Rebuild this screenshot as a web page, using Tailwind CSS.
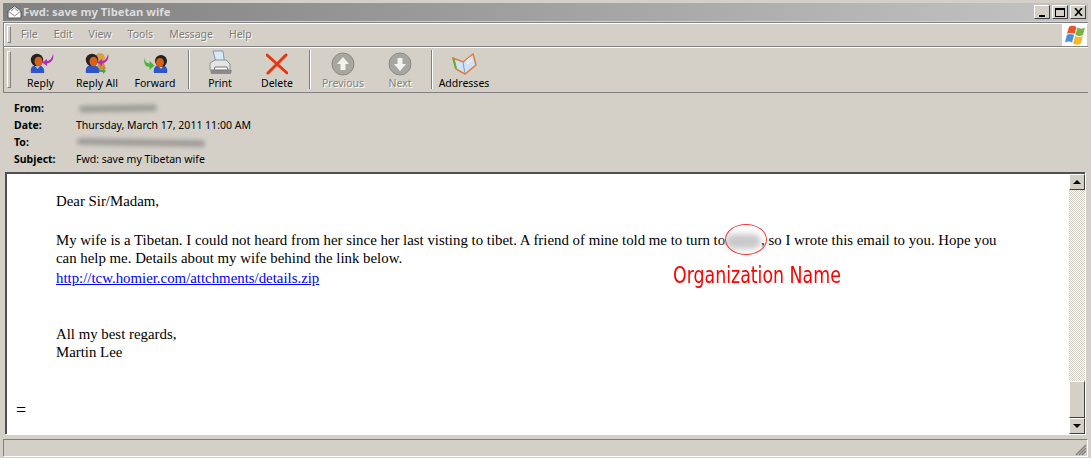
<!DOCTYPE html>
<html lang="en">
<head>
    <meta charset="UTF-8">
    <title>Fwd: save my Tibetan wife</title>
    <script src="https://cdn.jsdelivr.net/npm/@tailwindcss/browser@4"></script>
</head>
<body class="w-[1091px] h-[458px] overflow-hidden bg-[#d4d0c8] font-['Noto_Sans',sans-serif] text-[10.5px] text-black">
<div class="flex flex-col h-[458px] pt-[3px] pb-[1px]">

    <!-- title bar -->
    <div class="mx-[3px] h-[18px] shrink-0 flex items-center pl-[4px] pr-[2px] bg-gradient-to-r from-[#808080] to-[#c4c4c4]">
        <svg width="15" height="14" viewBox="0 0 15 14" class="mr-[1px]"><path d="M1 13V6L7.500 1 14 6v7z" fill="#fff" stroke="#555"/><path d="M1 6l6.500 5L14 6M4 6l3.500-3L11 6" fill="none" stroke="#888"/></svg>
        <span class="font-bold text-[#dcdcdc] leading-none text-[11.25px]">Fwd: save my Tibetan wife</span>
        <div class="ml-auto flex gap-[2px] items-center">
            <div class="w-[16px] h-[14px] bg-[#d4d0c8] border border-t-white border-l-white border-r-[#404040] border-b-[#404040] flex items-end justify-center pb-[1px]"><div class="w-[6px] h-[2px] bg-black"></div></div>
            <div class="w-[16px] h-[14px] bg-[#d4d0c8] border border-t-white border-l-white border-r-[#404040] border-b-[#404040] flex items-center justify-center"><div class="w-[10px] h-[9px] border border-black border-t-2"></div></div>
            <div class="w-[16px] h-[14px] bg-[#d4d0c8] border border-t-white border-l-white border-r-[#404040] border-b-[#404040] flex items-center justify-center"><svg width="9" height="8" viewBox="0 0 9 8"><path d="M1 0l7 8M8 0L1 8" stroke="#000" stroke-width="1.6"/></svg></div>
        </div>
    </div>

    <!-- menu bar -->
    <div class="mt-[1px] h-[25px] shrink-0 flex border-y border-t-[#808080] border-b-[#808080] shadow-[inset_0_1px_0_#fff,inset_1px_0_0_#fff] mx-[3px] border-l border-l-[#808080]">
        <div class="w-[4px] my-[3px] ml-[3px] border border-r-[#808080] border-b-[#808080] border-t-white border-l-white"></div>
        <div class="flex items-center text-[#7d7b76] [text-shadow:1px_1px_0_#fff] pl-[10px] gap-[16px]">
            <span>File</span><span>Edit</span><span>View</span><span>Tools</span><span>Message</span><span>Help</span>
        </div>
        <div class="ml-auto w-[25px] bg-white flex items-center justify-center mr-[1px]">
            <svg width="22" height="22" viewBox="0 0 22 22"><path d="M5 3C8 1 10 2 12.500 3L10.500 10C8 8.500 5.500 8.500 3 10z" fill="#e8532b"/><path d="M13.500 3.500C16 5 19 5 21 3.500L19 11C17 12.500 14 12.500 11.500 10.500z" fill="#7bb342"/><path d="M2.800 11C5 9.500 8 9.500 10.200 11L8 18.500C6 17 3 17 1 18.500z" fill="#4a90d9"/><path d="M11.200 11.500C14 13.500 16.500 13.500 18.800 12L16.800 19.500C14 21.500 11.500 21 9 19.500z" fill="#f5b82e"/></svg>
        </div>
    </div>

    <!-- toolbar -->
    <div class="mx-[3px] h-[46px] shrink-0 flex border-b border-[#808080] border-l border-l-[#808080] shadow-[inset_0_1px_0_#fff]">
        <div class="w-[4px] my-[4px] ml-[3px] border border-r-[#808080] border-b-[#808080] border-t-white border-l-white"></div>

        <button class="w-[59px] flex flex-col items-center pt-[5px]">
            <svg width="28" height="24" viewBox="0 0 28 24"><path d="M4 21c-1-5 1-8 6-8s8 3 7 8z" fill="#2f55c8"/><path d="M8 14l2.500 3 2.500-3z" fill="#bcd"/><circle cx="10" cy="8" r="6.200" fill="#222"/><ellipse cx="11.500" cy="9.500" rx="4" ry="4.800" fill="#d9601a"/><path d="M26 2c1.500 5-1.500 9-6 9.500V14l-5-3.500 5-3.500v2c3 0 5-3 6-7z" fill="#b52fb0"/></svg>
            <span class="mt-[2px] leading-none">Reply</span>
        </button>
        <button class="w-[54px] flex flex-col items-center pt-[5px]">
            <svg width="28" height="24" viewBox="0 0 28 24"><circle cx="17" cy="6" r="5" fill="#dca04a"/><path d="M12 19l4-8h5l2 6z" fill="#c98f3c"/><path d="M3 21c-1-5 1-8 6-8s8 3 7 8z" fill="#2f55c8"/><circle cx="9" cy="8" r="6.200" fill="#222"/><ellipse cx="10.500" cy="9.500" rx="4" ry="4.800" fill="#d9601a"/><path d="M25 2c1.500 5-1.500 9-6 9.500V14l-5-3.500 5-3.500v2c3 0 5-3 6-7z" fill="#b52fb0"/><path d="M16 18h4v-2l3 3-3 3v-2h-4z" fill="#3fa83f"/></svg>
            <span class="mt-[2px] leading-none">Reply All</span>
        </button>
        <button class="w-[62px] flex flex-col items-center pt-[5px]">
            <svg width="28" height="24" viewBox="0 0 28 24"><path d="M13 21c-1-5 1-8 6.500-8s7.500 3 6.500 8z" fill="#2f55c8"/><path d="M17.500 14l2.500 3 2.500-3z" fill="#bcd"/><circle cx="20" cy="9" r="6" fill="#222"/><ellipse cx="19" cy="10.500" rx="3.900" ry="4.500" fill="#d9601a"/><path d="M4 5c-1 3 1 6 4.500 6.500V9l5 4.500-5 4.500v-3C4 15 2 10 4 5z" fill="#49b63c"/></svg>
            <span class="mt-[2px] leading-none">Forward</span>
        </button>
        <div class="w-[2px] my-[3px] ml-[2px] border-l border-l-[#808080] border-r border-r-white"></div>

        <button class="w-[60px] flex flex-col items-center pt-[3px]">
            <svg width="26" height="26" viewBox="0 0 26 26"><path d="M6 1h10l1.500 11H9z" fill="#d9e8f7" stroke="#7d9bb5"/><path d="M3 13l5-3h11l4 4v6H3z" fill="#e4e4e2" stroke="#909090"/><path d="M3 20h22l-1 4H4z" fill="#8c8c8c"/><path d="M8 17h12l1 3H7z" fill="#fafafa" stroke="#777"/></svg>
            <span class="mt-[2px] leading-none">Print</span>
        </button>
        <button class="w-[54px] flex flex-col items-center pt-[5px]">
            <svg width="22" height="24" viewBox="0 0 22 24"><path d="M1 3l20 18M20 3L2 21" stroke="#e8360c" stroke-width="3" stroke-linecap="round"/></svg>
            <span class="mt-[2px] leading-none">Delete</span>
        </button>
        <div class="w-[2px] my-[3px] ml-[5px] border-l border-l-[#808080] border-r border-r-white"></div>

        <button class="w-[64px] flex flex-col items-center pt-[5px] text-[#85837e] [text-shadow:1px_1px_0_#fff]">
            <svg width="24" height="24" viewBox="0 0 24 24"><circle cx="12" cy="12" r="11" fill="#a8a6a1" stroke="#8c8a86"/><path d="M12 5l6 7h-3.500v6h-5v-6H6z" fill="#f2f1ee"/></svg>
            <span class="mt-[2px] leading-none">Previous</span>
        </button>
        <button class="w-[50px] flex flex-col items-center pt-[5px] text-[#85837e] [text-shadow:1px_1px_0_#fff]">
            <svg width="24" height="24" viewBox="0 0 24 24"><circle cx="12" cy="12" r="11" fill="#a8a6a1" stroke="#8c8a86"/><path d="M12 19l-6-7h3.500V6h5v6H18z" fill="#f2f1ee"/></svg>
            <span class="mt-[2px] leading-none">Next</span>
        </button>
        <div class="w-[2px] my-[3px] ml-[6px] border-l border-l-[#808080] border-r border-r-white"></div>

        <button class="w-[62px] flex flex-col items-center pt-[5px]">
            <svg width="26" height="24" viewBox="0 0 26 24"><path d="M2 6l10 4 10-8 3 11-11 9L5 17z" fill="#cfe2f7" stroke="#e9793a" stroke-width="1.500"/><path d="M12 10l2 12" stroke="#7f9fc0"/><path d="M2.500 6.500l2.500 10" stroke="#5fae38" stroke-width="2"/><path d="M15 9l5-4M16 12l5-4" stroke="#fff"/></svg>
            <span class="mt-[2px] leading-none">Addresses</span>
        </button>
    </div>

    <!-- message header -->
    <div class="h-[79px] shrink-0 pl-[14px] pt-[7px] grid grid-cols-[62px_1fr] auto-rows-[17px] items-center">
        <b>From:</b>
        <div class="w-[78px] h-[7px] ml-[3px] rounded-full bg-[#a09e99] blur-[2px] -rotate-1"></div>
        <b>Date:</b>
        <span>Thursday, March 17, 2011 11:00 AM</span>
        <b>To:</b>
        <div class="w-[128px] h-[7px] ml-[1px] rounded-full bg-[#a09e99] blur-[2px] rotate-1"></div>
        <b>Subject:</b>
        <span>Fwd: save my Tibetan wife</span>
    </div>

    <!-- body -->
    <div class="relative flex-1 flex min-h-0 ml-[5px] mr-[6px] border-t-2 border-l-2 border-t-[#505050] border-l-[#505050] bg-white shadow-[1px_1px_0_#fff]">
        <div class="flex-1 pl-[49px] pt-[18px] pr-[60px] font-['Liberation_Serif',serif] text-[14.85px] leading-[18px]">
            <p>Dear Sir/Madam,</p>
            <p class="mt-[21px]">My wife is a Tibetan. I could not heard from her since her last visting to tibet. A friend of mine told me to turn to<span class="inline-block align-middle w-[36px] h-[15px] bg-[#c8c8c8] blur-[3px] rounded-full"></span>, so I wrote this email to you. Hope you can help me. Details about my wife behind the link below.</p>
            <a href="#" class="block mt-[2px] text-[#0000ff] underline">http://tcw.homier.com/attchments/details.zip</a>
            <p class="mt-[38px]">All my best regards,</p>
            <p>Martin Lee</p>
            <p class="-ml-[40px] mt-[40px] text-[18px]">=</p>
        </div>

        <!-- annotation -->
        <div class="absolute left-[718px] top-[50px] w-[42px] h-[31px] rounded-[50%] border border-[#f03c3c]"></div>
        <div class="absolute left-[666px] top-[88px] origin-left scale-x-[0.84] font-['DejaVu_Sans_Condensed','DejaVu_Sans',sans-serif] text-[23px] leading-[26px] text-[#ff0000] whitespace-nowrap">Organization Name</div>

        <!-- scrollbar -->
        <div class="w-[16px] flex flex-col bg-[repeating-conic-gradient(#d4d0c8_0_25%,#fff_0_50%)] bg-[length:2px_2px]">
            <div class="h-[16px] bg-[#d4d0c8] border border-t-white border-l-white border-r-[#404040] border-b-[#404040] flex items-center justify-center"><div class="border-x-[4px] border-b-[4px] border-x-transparent border-b-black"></div></div>
            <div class="flex-1"></div>
            <div class="h-[37px] bg-[#d4d0c8] border border-t-white border-l-white border-r-[#404040] border-b-[#404040]"></div>
            <div class="h-[16px] bg-[#d4d0c8] border border-t-white border-l-white border-r-[#404040] border-b-[#404040] flex items-center justify-center"><div class="border-x-[4px] border-t-[4px] border-x-transparent border-t-black"></div></div>
        </div>
    </div>

    <!-- status bar -->
    <div class="mt-[5px] mx-[3px] h-[18px] shrink-0 border border-t-[#808080] border-l-[#808080] border-r-white border-b-white relative">
        <svg width="12" height="12" viewBox="0 0 12 12" class="absolute right-0 bottom-0"><path d="M11 1L1 11M11 4L4 11M11 7l-4 4" stroke="#808080" stroke-width="1.500"/></svg>
    </div>
</div>
</body>
</html>
